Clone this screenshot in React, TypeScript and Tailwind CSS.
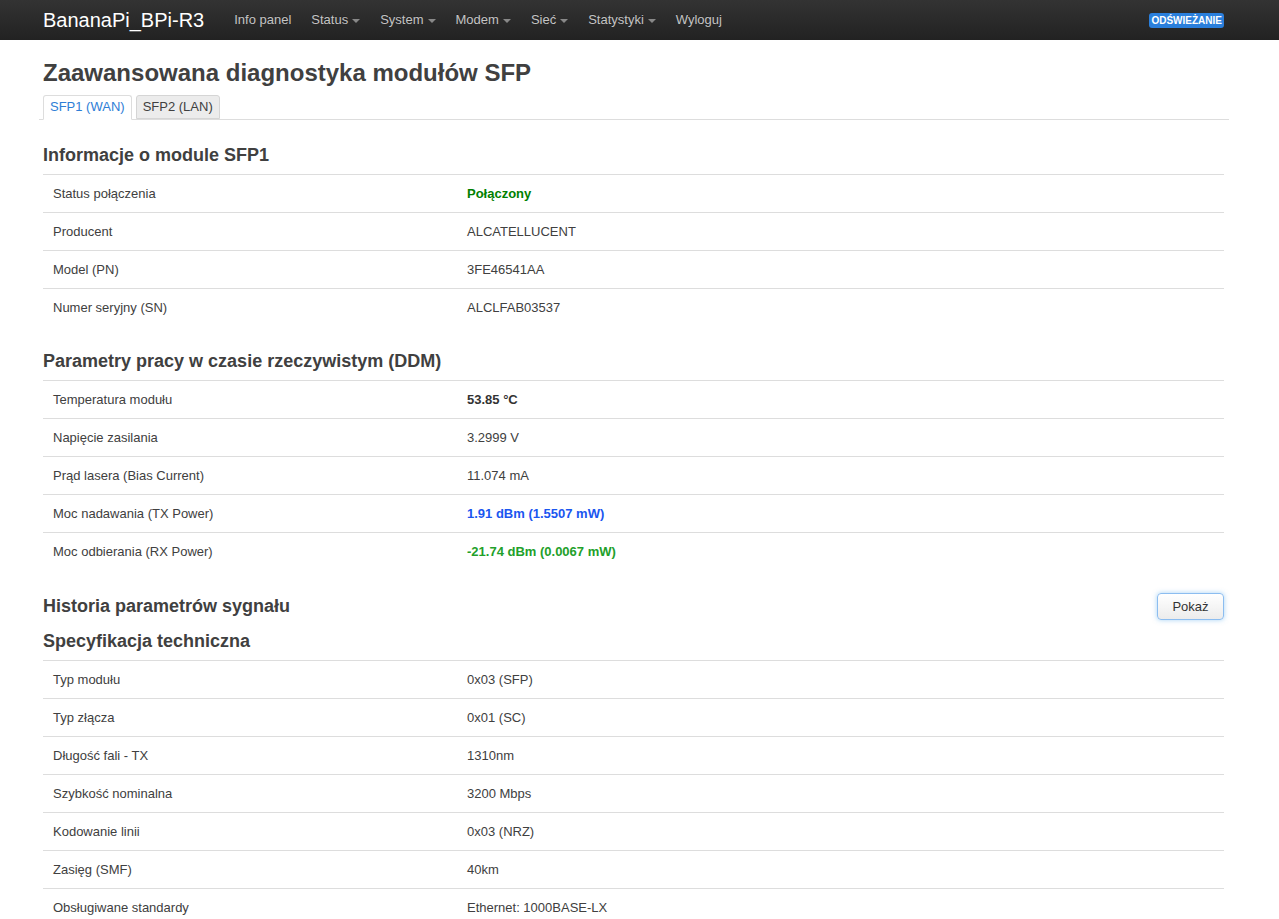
type Row = { label: string; value: string; tone?: "ok" | "bold" | "tx" | "rx" };

const moduleInfo: Row[] = [
  { label: "Status połączenia", value: "Połączony", tone: "ok" },
  { label: "Producent", value: "ALCATELLUCENT" },
  { label: "Model (PN)", value: "3FE46541AA" },
  { label: "Numer seryjny (SN)", value: "ALCLFAB03537" },
];

const ddm: Row[] = [
  { label: "Temperatura modułu", value: "53.85 °C", tone: "bold" },
  { label: "Napięcie zasilania", value: "3.2999 V" },
  { label: "Prąd lasera (Bias Current)", value: "11.074 mA" },
  { label: "Moc nadawania (TX Power)", value: "1.91 dBm (1.5507 mW)", tone: "tx" },
  { label: "Moc odbierania (RX Power)", value: "-21.74 dBm (0.0067 mW)", tone: "rx" },
];

const spec: Row[] = [
  { label: "Typ modułu", value: "0x03 (SFP)" },
  { label: "Typ złącza", value: "0x01 (SC)" },
  { label: "Długość fali - TX", value: "1310nm" },
  { label: "Szybkość nominalna", value: "3200 Mbps" },
  { label: "Kodowanie linii", value: "0x03 (NRZ)" },
  { label: "Zasięg (SMF)", value: "40km" },
  { label: "Obsługiwane standardy", value: "Ethernet: 1000BASE-LX" },
];

const toneClass: Record<string, string> = {
  ok: "font-bold text-[#008000]",
  bold: "font-bold text-[#333]",
  tx: "font-bold text-[#1a56f0]",
  rx: "font-bold text-[#22a02a]",
};

const navItems = [
  { name: "Info panel", drop: false },
  { name: "Status", drop: true },
  { name: "System", drop: true },
  { name: "Modem", drop: true },
  { name: "Sieć", drop: true },
  { name: "Statystyki", drop: true },
  { name: "Wyloguj", drop: false },
];

function InfoTable({ rows }: { rows: Row[] }) {
  return (
    <div className="mt-[5px] w-[1181px]">
      {rows.map((r) => (
        <div
          key={r.label}
          className="flex h-[38px] items-center border-t border-[#ddd] text-[13px]"
        >
          <div className="w-[414px] px-[10px]">{r.label}</div>
          <div className={`px-[10px] ${r.tone ? toneClass[r.tone] : ""}`}>
            {r.value}
          </div>
        </div>
      ))}
    </div>
  );
}

function SectionTitle({ children }: { children: string }) {
  return (
    <h3 className="text-[18px] leading-[27px] font-bold text-[#404040]">
      {children}
    </h3>
  );
}

export default function App() {
  return (
    <div className="min-h-screen bg-white font-['Liberation_Sans',Arial,sans-serif] text-[#404040]">
      {/* Top bar */}
      <div className="h-[40px] bg-gradient-to-b from-[#333] to-[#222]">
        <div className="flex h-full w-[1181px] items-center ml-[43px]">
          <span className="pr-[20px] text-[20px] text-white">BananaPi_BPi-R3</span>
          <ul className="flex items-center">
            {navItems.map((n) => (
              <li
                key={n.name}
                className="flex items-center px-[10px] text-[13px] font-medium text-[#c4c4c4] [text-shadow:0_-1px_0_rgba(0,0,0,0.25)]"
              >
                {n.name}
                {n.drop && (
                  <span className="ml-[4px] mt-[1px] h-0 w-0 border-x-[4px] border-t-[4px] border-x-transparent border-t-[#888]" />
                )}
              </li>
            ))}
          </ul>
          <span className="ml-auto rounded-[3px] bg-[#2a7fdc] px-[2px] text-[10px] leading-[15px] font-bold text-white">
            ODŚWIEŻANIE
          </span>
        </div>
      </div>

      <div className="ml-[43px] w-[1181px]">
        <h2 className="mt-[15px] text-[24px] leading-[36px] font-bold text-[#404040]">
          Zaawansowana diagnostyka modułów SFP
        </h2>

        {/* Tabs */}
        <div className="-ml-[4px] mt-[4px] flex w-[1190px] gap-[4px] border-b border-[#ddd] pl-[4px]">
          <div className="-mb-px rounded-t-[3px] border border-[#ddd] border-b-white bg-white px-[6px] text-[13px] leading-[22px] text-[#2e7ed6]">
            SFP1 (WAN)
          </div>
          <div className="rounded-t-[3px] border border-[#d5d5d5] bg-[#ececec] px-[6px] text-[13px] leading-[22px] text-[#404040]">
            SFP2 (LAN)
          </div>
        </div>

        <div className="mt-[22px]">
          <SectionTitle>Informacje o module SFP1</SectionTitle>
          <InfoTable rows={moduleInfo} />
        </div>

        <div className="mt-[22px]">
          <SectionTitle>Parametry pracy w czasie rzeczywistym (DDM)</SectionTitle>
          <InfoTable rows={ddm} />
        </div>

        <div className="mt-[23px] flex h-[27px] items-center justify-between">
          <SectionTitle>Historia parametrów sygnału</SectionTitle>
          <button className="h-[27px] w-[67px] rounded-[4px] border border-[#8cbdf0] bg-gradient-to-b from-white to-[#ececec] text-[13px] text-[#333] shadow-[0_0_5px_rgba(82,168,236,0.5)]">
            Pokaż
          </button>
        </div>

        <div className="mt-[8px]">
          <SectionTitle>Specyfikacja techniczna</SectionTitle>
          <InfoTable rows={spec} />
        </div>
      </div>
    </div>
  );
}
